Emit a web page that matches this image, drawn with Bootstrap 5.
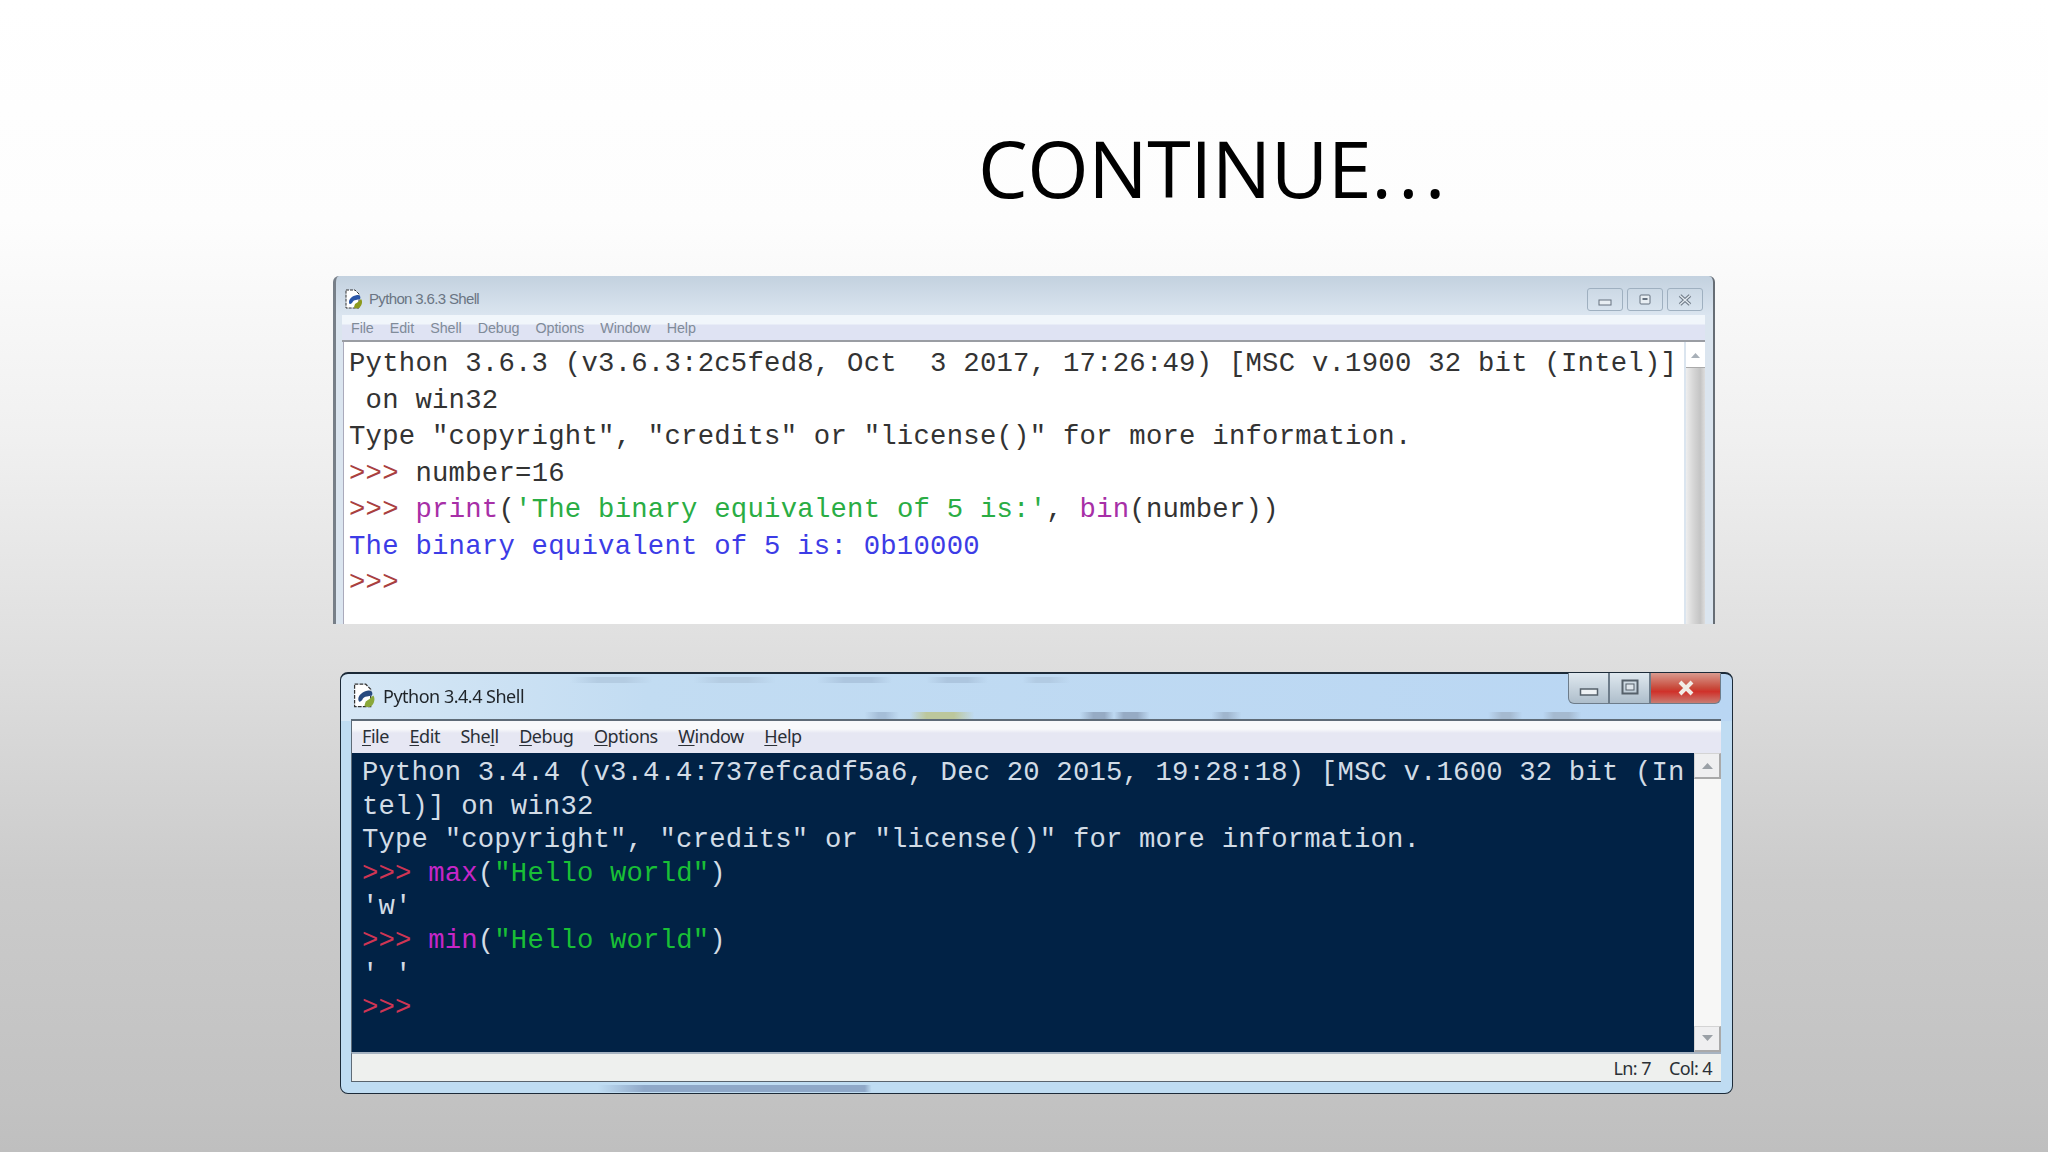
<!DOCTYPE html>
<html lang="en">
<head>
<meta charset="utf-8">
<title>Continue</title>
<link rel="stylesheet" href="https://cdn.jsdelivr.net/npm/bootstrap@5.3.0/dist/css/bootstrap.min.css">
<style>
html,body{height:100%;}
body{width:2048px;height:1152px;overflow:hidden;background:linear-gradient(180deg,#fff 0,#fdfdfd 220px,#f0f0f0 441px,#dedede 661px,#cbcbcb 882px,#c2c2c2 1102px,#bfbfbf 1152px);}
.slide-head{height:276px;padding:118px 0 0 978px;}
.slide-title{font-family:"Open Sans","Noto Sans",sans-serif;font-size:79px;line-height:100px;color:#000;margin:0;font-weight:400;letter-spacing:-.5px;}
.dots{letter-spacing:6px;}
.win-one{width:1382px;height:348px;margin-left:333px;background:#dbe5ef;border-left:3px solid #777f88;border-right:2px solid #666d75;border-radius:6px 6px 0 0;background-image:linear-gradient(180deg,#c3d1df 0,#dbe5f0 40px,#dbe5ef 40px);}
.win-one .bar{height:39px;padding:12px 10px 0 9px;flex:none;}
.ttl-one{font-family:"Liberation Sans",sans-serif;font-size:15px;line-height:22px;color:#6a7583;letter-spacing:-.65px;margin-left:6px;}
.ico{display:block;flex:none;}
.ctl-one{width:36px;height:23px;border:1px solid #9fb0c0;border-radius:3px;background:linear-gradient(180deg,#ccd9e5,#d8e3ee);}
.menu-one{height:27px;flex:none;margin:0 8px 0 6px;background:linear-gradient(180deg,#f1f6fb 0,#f1f6fb 9px,#dfe3f3 10px,#dfe3f3 100%);border-bottom:2px solid #9a9da3;font-family:"Liberation Sans",sans-serif;font-size:14.3px;line-height:27px;color:#808b99;padding-left:9px;gap:16.2px;letter-spacing:-.1px;}
.body-one{height:282px;margin:0 8px 0 7px;}
.text-one{flex:1 1 auto;background:#fff;border-left:1px solid #aab;padding:4px 0 0 5px;min-width:0;}
.code-line{font-family:"Liberation Mono","Courier New",monospace;font-size:27.28px;white-space:pre;}
.text-one .code-line{line-height:36.5px;color:#333;letter-spacing:.24px;height:36.5px;}
.scroll-one{flex:none;width:19px;margin-left:2px;background:#f0f0f0;}
.arrow-slot-one{height:25px;background:#fff;flex:none;}
.thumb-one{flex:1 1 auto;background:linear-gradient(90deg,#eee,#d8d8d8 35%,#c4c4c4 75%,#ddd);border-top:1px solid #aaa;}
.p1{color:#a9403f}.k1{color:#a72fa7}.s1{color:#2aad44}
.text-one .o1{color:#3c3ce6}
.gap-win{height:48px;}
.win-two{width:1393px;height:422px;margin-left:340px;border:1px solid #1c2a38;border-top-width:2px;border-radius:8px;background:linear-gradient(90deg,#d6e7f5 0,#c2dcf2 22%,#b9d6f3 100%) no-repeat 0 0/100% 47px,#bfdcf2;padding:0 11px 0 10px;filter:blur(.35px);}
.win-two .bar{position:relative;height:45px;flex:none;background:
  linear-gradient(90deg,transparent 16%,#b4cce2 18%,#b4cce2 20%,transparent 22%,transparent 25%,#b4cce2 27%,#b4cce2 29%,transparent 31%,transparent 34%,#adc6df 36%,#adc6df 38%,transparent 39.500%,transparent 42%,#adc6df 43.500%,#adc6df 45%,transparent 46.500%,transparent 49%,#b2cbe3 50%,#b2cbe3 51%,transparent 52.500%) no-repeat 0 3px/100% 6px,
  linear-gradient(90deg,transparent 37.500%,#a5bed8 38.500%,#a5bed8 39%,transparent 40%,transparent 40.800%,#bcc79c 42%,#bcc79c 44%,transparent 45.500%,transparent 53.200%,#96abc4 54.200%,#96abc4 55%,transparent 55.700%,#96abc4 56.400%,#96abc4 57.400%,transparent 58.300%,transparent 62.800%,#a0b6ce 63.700%,#a0b6ce 64%,transparent 65%,transparent 83%,#a5bad0 84%,#a5bad0 84.600%,transparent 85.500%,transparent 87%,#a5bad0 87.800%,#a5bad0 88.900%,transparent 89.800%) no-repeat 0 100%/100% 7px;}
.ttl-two{font-family:"Noto Sans",sans-serif;font-size:18px;line-height:28px;color:#1f2429;letter-spacing:-.5px;margin-left:7px;}
.icon-two{margin-left:2px;}
.ctls-two{height:31px;margin-top:-1px;}
.ctl-two{height:31px;width:41px;border:1px solid #6d7c8a;border-top:0;background:linear-gradient(180deg,#dfe8ef,#aebecb);}
.ctl-two.first{border-radius:0 0 0 6px;}
.ctl-two.closer{width:71px;border-radius:0 0 6px 0;background:linear-gradient(180deg,#d99a8e 0,#c8493a 50%,#d0312a 62%,#c97c72);}
.menu-two{height:34px;flex:none;border-top:2px solid #5e6b77;border-left:1px solid #5e6b77;background:linear-gradient(180deg,#f8f9fb 0,#f8f9fb 8px,#e6e7f3 12px);font-family:"Noto Sans",sans-serif;font-size:18px;line-height:31px;color:#2a2f36;padding-left:10px;gap:20.500px;letter-spacing:-.45px;}
.menu-two u{text-underline-offset:2px;}
.body-two{height:299px;flex:none;}
.text-two{flex:1 1 auto;background:#012245;padding:3px 0 0 10px;border-left:1px solid #5e6b77;overflow:hidden;min-width:0;}
.text-two .code-line{line-height:33.6px;height:33.6px;color:#d2dce6;letter-spacing:.17px;}
.p2{color:#cf3554}.k2{color:#c626c8}.s2{color:#19bf36}
.scroll-two{flex:none;width:27px;background:#f7f7f6;}
.step-two{height:26px;background:#efeff0;border:1px solid #d4d4d4;border-right:2px solid #a9a9a9;border-bottom:2px solid #a9a9a9;}
.status-two{height:30px;flex:none;background:#eef0ee;border-top:2px solid #a6b3c1;border-bottom:1px solid #59636d;border-left:1px solid #5e6b77;font-family:"Noto Sans",sans-serif;font-size:18px;line-height:28px;color:#2b3036;padding-right:9px;gap:18px;letter-spacing:-.6px;}
.frame-streak{height:7px;flex:none;margin-top:3px;background:linear-gradient(90deg,transparent 18%,#8fa8c8 21.400%,#8fa8c8 37.500%,transparent 38%);}
</style>
</head>
<body>
<header class="slide-head"><h1 class="slide-title">CONTINUE<span class="dots">...</span></h1></header>

<section class="win-one d-flex flex-column">
  <div class="bar d-flex align-items-start justify-content-between">
    <div class="d-flex align-items-center">
      <svg class="ico" width="18" height="21" viewBox="0 0 18 21"><path d="M1 1h9l4 4v14H1z" fill="#fff" stroke="#333" stroke-width="1" stroke-dasharray="3 1"/><path d="M12 6c3 0 4 2 3 4l-4 1c-2 0-3 1-4 3-2 2-3 1-3-1 0-3 3-6 8-7z" fill="#2a56a8"/><path d="M16 10c2 2 1 7-2 9-3 1-5 0-5-1l1-3 3-2z" fill="#8d9a1c"/></svg>
      <span class="ttl-one">Python 3.6.3 Shell</span>
    </div>
    <div class="d-flex gap-1">
      <span class="ctl-one d-flex align-items-center justify-content-center"><svg width="14" height="12" viewBox="0 0 14 12"><rect x="1" y="6" width="12" height="5" fill="#e8eef3" stroke="#64707e"/></svg></span>
      <span class="ctl-one d-flex align-items-center justify-content-center"><svg width="12" height="12" viewBox="0 0 12 12"><rect x="1" y="1" width="10" height="9" rx="1" fill="#e8eef3" stroke="#64707e"/><rect x="3.500" y="4" width="5" height="2" fill="#64707e"/></svg></span>
      <span class="ctl-one d-flex align-items-center justify-content-center"><svg width="14" height="12" viewBox="0 0 14 12"><path d="M2 1.500l10 9M12 1.500l-10 9" fill="none" stroke="#6d7986" stroke-width="3.600"/><path d="M2 1.500l10 9M12 1.500l-10 9" fill="none" stroke="#e4ebf1" stroke-width="1.400"/></svg></span>
    </div>
  </div>
  <nav class="menu-one d-flex"><span>File</span><span>Edit</span><span>Shell</span><span>Debug</span><span>Options</span><span>Window</span><span>Help</span></nav>
  <div class="body-one d-flex">
    <div class="text-one">
      <div class="code-line">Python 3.6.3 (v3.6.3:2c5fed8, Oct  3 2017, 17:26:49) [MSC v.1900 32 bit (Intel)]</div>
      <div class="code-line"> on win32</div>
      <div class="code-line">Type "copyright", "credits" or "license()" for more information.</div>
      <div class="code-line"><span class="p1">&gt;&gt;&gt;</span> number=16</div>
      <div class="code-line"><span class="p1">&gt;&gt;&gt;</span> <span class="k1">print</span>(<span class="s1">'The binary equivalent of 5 is:'</span>, <span class="k1">bin</span>(number))</div>
      <div class="code-line o1">The binary equivalent of 5 is: 0b10000</div>
      <div class="code-line"><span class="p1">&gt;&gt;&gt;</span></div>
    </div>
    <div class="scroll-one d-flex flex-column">
      <div class="arrow-slot-one d-flex align-items-center justify-content-center"><svg width="9" height="6" viewBox="0 0 9 6"><path d="M0 6l4.500-5L9 6z" fill="#a8b0b8"/></svg></div>
      <div class="thumb-one"></div>
    </div>
  </div>
</section>

<div class="gap-win"></div>

<section class="win-two d-flex flex-column">
  <div class="bar d-flex align-items-start justify-content-between">
    <div class="d-flex align-items-center pt-2">
      <svg class="ico icon-two" width="23" height="26" viewBox="0 0 18 21"><path d="M1 1h9l4 4v14H1z" fill="#fff" stroke="#333" stroke-width="1" stroke-dasharray="3 1"/><path d="M12 6c3 0 4 2 3 4l-4 1c-2 0-3 1-4 3-2 2-3 1-3-1 0-3 3-6 8-7z" fill="#27497f"/><path d="M16 10c2 2 1 7-2 9-3 1-5 0-5-1l1-3 3-2z" fill="#8aa83a"/></svg>
      <span class="ttl-two">Python 3.4.4 Shell</span>
    </div>
    <div class="ctls-two d-flex">
      <span class="ctl-two first d-flex align-items-center justify-content-center"><svg width="20" height="18" viewBox="0 0 20 18"><rect x="1.500" y="10" width="17" height="6" fill="#eef2f5" stroke="#56616b" stroke-width="1.500"/></svg></span>
      <span class="ctl-two d-flex align-items-center justify-content-center"><svg width="18" height="18" viewBox="0 0 18 18"><rect x="1.500" y="1.500" width="15" height="13" fill="none" stroke="#56616b" stroke-width="2"/><rect x="5" y="5" width="8" height="6" fill="#dfe6ec" stroke="#56616b"/></svg></span>
      <span class="ctl-two closer d-flex align-items-center justify-content-center"><svg width="18" height="16" viewBox="0 0 18 16"><path d="M3 2l12 12M15 2L3 14" fill="none" stroke="#f1ece6" stroke-width="4"/></svg></span>
    </div>
  </div>
  <nav class="menu-two d-flex"><span><u>F</u>ile</span><span><u>E</u>dit</span><span>She<u>l</u>l</span><span><u>D</u>ebug</span><span><u>O</u>ptions</span><span><u>W</u>indow</span><span><u>H</u>elp</span></nav>
  <div class="body-two d-flex">
    <div class="text-two">
      <div class="code-line">Python 3.4.4 (v3.4.4:737efcadf5a6, Dec 20 2015, 19:28:18) [MSC v.1600 32 bit (In</div>
      <div class="code-line">tel)] on win32</div>
      <div class="code-line">Type "copyright", "credits" or "license()" for more information.</div>
      <div class="code-line"><span class="p2">&gt;&gt;&gt;</span> <span class="k2">max</span>(<span class="s2">"Hello world"</span>)</div>
      <div class="code-line">'w'</div>
      <div class="code-line"><span class="p2">&gt;&gt;&gt;</span> <span class="k2">min</span>(<span class="s2">"Hello world"</span>)</div>
      <div class="code-line">' '</div>
      <div class="code-line"><span class="p2">&gt;&gt;&gt;</span></div>
    </div>
    <div class="scroll-two d-flex flex-column justify-content-between">
      <div class="step-two d-flex align-items-center justify-content-center"><svg width="11" height="7" viewBox="0 0 11 7"><path d="M0 7l5.500-6L11 7z" fill="#9aa0a6"/></svg></div>
      <div class="step-two d-flex align-items-center justify-content-center"><svg width="11" height="7" viewBox="0 0 11 7"><path d="M0 0l5.500 6L11 0z" fill="#9aa0a6"/></svg></div>
    </div>
  </div>
  <footer class="status-two d-flex justify-content-end"><span>Ln: 7</span><span>Col: 4</span></footer>
  <div class="frame-streak"></div>
</section>
<script src="https://cdn.jsdelivr.net/npm/bootstrap@5.3.0/dist/js/bootstrap.bundle.min.js"></script>
</body>
</html>
